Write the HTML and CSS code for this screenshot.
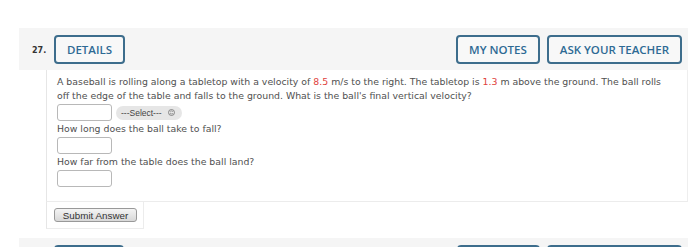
FILE: index.html
```html
<!DOCTYPE html>
<html>
<head>
<meta charset="utf-8">
<link rel="stylesheet" href="styles.css">
</head>
<body>
<div class="page">
  <div class="question">
    <div class="qhead">
      <span class="qnum">27.</span>
      <span class="hbtn">DETAILS</span>
      <span class="spacer"></span>
      <span class="hbtn">MY NOTES</span>
      <span class="hbtn">ASK YOUR TEACHER</span>
    </div>
    <div class="qbody">
      <p class="text">A baseball is rolling along a tabletop with a velocity of <span class="red">8.5</span> m/s to the right. The tabletop is <span class="red">1.3</span> m above the ground. The ball rolls off the edge of the table and falls to the ground. What is the ball's final vertical velocity?</p>
      <div class="row">
        <span class="inp"></span>
        <span class="sel">---Select--- <svg class="updown" width="7" height="7" viewBox="0 0 8 8"><circle cx="4" cy="4" r="3.4" fill="none" stroke="#777" stroke-width="1"/><path d="M2.6 3.4 L4 2 L5.4 3.4 M2.6 4.6 L4 6 L5.4 4.6" fill="none" stroke="#777" stroke-width="0.9"/></svg></span>
      </div>
      <p class="text">How long does the ball take to fall?</p>
      <div class="row"><span class="inp"></span></div>
      <p class="text">How far from the table does the ball land?</p>
      <div class="row"><span class="inp"></span></div>
    </div>
    <div class="submit-area">
      <span class="submit">Submit Answer</span>
    </div>
  </div>
  <div class="question next">
    <div class="qhead">
      <span class="qnum"></span>
      <span class="hbtn w-details"></span>
      <span class="spacer"></span>
      <span class="hbtn w-notes"></span>
      <span class="hbtn w-ask"></span>
    </div>
  </div>
</div>
</body>
</html>
```

FILE: styles.css
```css
html, body {
  margin: 0;
  padding: 0;
  background: #ffffff;
}
.page {
  width: 669px;
  margin-left: 19px;
  padding-top: 28px;
  height: 219px;
  overflow: hidden;
}
.question.next {
  margin-top: 9px;
}
.qhead {
  height: 42px;
  background: #f5f5f5;
  display: flex;
  align-items: center;
  padding: 0 6px 0 13px;
  gap: 7px;
}
.qnum {
  font-family: "DejaVu Sans", Verdana, sans-serif;
  font-weight: bold;
  font-size: 8px;
  color: #333333;
  width: 15px;
  padding-top: 3px;
}
.spacer {
  flex: 1;
}
.hbtn {
  box-sizing: border-box;
  height: 29px;
  padding: 0 11px;
  border: 2px solid #3d6d8c;
  border-radius: 4px;
  display: flex;
  align-items: center;
  font-family: "Open Sans", sans-serif;
  font-weight: 600;
  font-size: 11.5px;
  color: #2e6a94;
  background: #f8f8f8;
}
.w-details { width: 70px; }
.w-notes { width: 83px; }
.w-ask { width: 135px; }
.qbody {
  margin-left: 27px;
  border-left: 1px solid #e6e6e6;
  border-right: 1px solid #eeeeee;
  border-bottom: 1px solid #ececec;
  padding: 5px 17px 13px 10px;
  background: #ffffff;
}
.text {
  margin: 0;
  font-family: "DejaVu Sans", Verdana, sans-serif;
  font-size: 9.35px;
  line-height: 14px;
  color: #505050;
}
.red {
  color: #e0413c;
}
.row {
  display: flex;
  align-items: center;
  gap: 4px;
  height: 19px;
}
.inp {
  box-sizing: border-box;
  width: 55px;
  height: 17px;
  border: 1px solid #b8b8b8;
  border-radius: 3px;
  background: #ffffff;
}
.sel {
  box-sizing: border-box;
  height: 14px;
  width: 66px;
  border-radius: 7px;
  background: #e6e6e6;
  display: flex;
  align-items: center;
  padding-left: 5px;
  gap: 6px;
  font-family: "Liberation Sans", Arial, sans-serif;
  font-size: 8.5px;
  color: #444444;
}
.updown {
  display: block;
}
.submit-area {
  margin-left: 27px;
  width: 98px;
  height: 27px;
  box-sizing: border-box;
  border-left: 1px solid #e6e6e6;
  border-right: 1px solid #ececec;
  border-bottom: 1px solid #ececec;
  display: flex;
  align-items: center;
  padding-left: 7px;
}
.submit {
  box-sizing: border-box;
  width: 83px;
  height: 14px;
  border: 1px solid #999999;
  border-radius: 3px;
  background: linear-gradient(#f4f4f4, #d8d8d8);
  font-family: "Liberation Sans", Arial, sans-serif;
  font-size: 9.8px;
  color: #333333;
  display: flex;
  align-items: center;
  justify-content: center;
}
```
